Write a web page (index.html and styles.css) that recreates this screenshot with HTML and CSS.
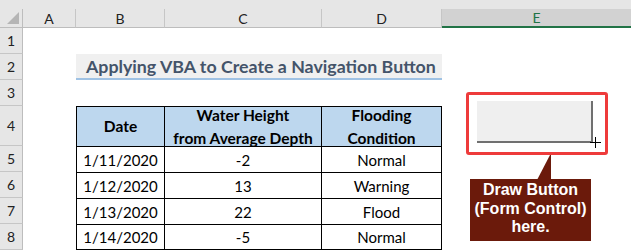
FILE: index.html
```html
<!DOCTYPE html>
<html>
<head>
<meta charset="utf-8">
<link rel="stylesheet" href="styles.css">
</head>
<body>
<div class="app">
  <div class="topstrip"></div>
  <div class="sheet">
    <div class="corner"><span class="tri"></span></div>
    <div class="colhead">A</div>
    <div class="colhead">B</div>
    <div class="colhead">C</div>
    <div class="colhead">D</div>
    <div class="colhead sel">E</div>

    <div class="rowhead">1</div>
    <div class="cell span5"></div>

    <div class="rowhead">2</div>
    <div class="cell"></div>
    <div class="title">Applying VBA to Create a Navigation Button</div>
    <div class="cell"></div>

    <div class="rowhead">3</div>
    <div class="cell span5"></div>

    <div class="rowhead">4</div>
    <div class="cell"></div>
    <div class="th first">Date</div>
    <div class="th">Water Height<br>from Average Depth</div>
    <div class="th last">Flooding<br>Condition</div>
    <div class="cell"></div>

    <div class="rowhead">5</div>
    <div class="cell"></div>
    <div class="td first">1/11/2020</div>
    <div class="td">-2</div>
    <div class="td last">Normal</div>
    <div class="cell"></div>

    <div class="rowhead">6</div>
    <div class="cell"></div>
    <div class="td first">1/12/2020</div>
    <div class="td">13</div>
    <div class="td last">Warning</div>
    <div class="cell"></div>

    <div class="rowhead">7</div>
    <div class="cell"></div>
    <div class="td first">1/13/2020</div>
    <div class="td">22</div>
    <div class="td last">Flood</div>
    <div class="cell"></div>

    <div class="rowhead">8</div>
    <div class="cell"></div>
    <div class="td first lastrow">1/14/2020</div>
    <div class="td lastrow">-5</div>
    <div class="td last lastrow">Normal</div>
    <div class="cell"></div>
  </div>

  <div class="redbox">
    <div class="fbutton"></div>
  </div>
  <svg class="cursor" width="11" height="11" viewBox="0 0 11 11"><path d="M5.5 0V11M0 5.5H11" stroke="#000" stroke-width="1"/></svg>
  <svg class="pointer" width="15" height="26" viewBox="0 0 15 26"><polygon points="0,26 13,1 14,1 14,26" fill="#6b1a0b"/></svg>
  <div class="callout">Draw Button<br>(Form Control)<br>here.</div>
</div>
</body>
</html>
```

FILE: styles.css
```css
html, body {
  margin: 0;
  padding: 0;
  background: #fff;
}
.app {
  position: relative;
  width: 631px;
  height: 251px;
  overflow: hidden;
  font-family: Lato, "Open Sans", sans-serif;
}
.topstrip {
  height: 9px;
  background: #e6e6e6;
}
.sheet {
  display: grid;
  grid-template-columns: 23px 53px 89px 157px 120px 189px;
  grid-template-rows: 19px 26px 26px 26px 40px 26px 26px 26px 26px;
}
.corner {
  background: #e6e6e6;
  border-right: 1px solid #bdbdbd;
  border-bottom: 1px solid #bdbdbd;
  position: relative;
}
.tri {
  position: absolute;
  right: 3px;
  bottom: 3px;
  width: 0;
  height: 0;
  border-left: 12px solid transparent;
  border-bottom: 12px solid #b5b5b5;
}
.colhead {
  background: #e6e6e6;
  border-right: 1px solid #c6c6c6;
  border-bottom: 1px solid #bdbdbd;
  display: flex;
  align-items: center;
  justify-content: center;
  font-size: 14px;
  color: #222;
}
.colhead.sel {
  background: #d2d2d2;
  border-right: none;
  border-bottom: 2px solid #217346;
  color: #217346;
}
.rowhead {
  background: #e6e6e6;
  border-right: 1px solid #bdbdbd;
  border-bottom: 1px solid #c6c6c6;
  display: flex;
  align-items: center;
  justify-content: center;
  font-size: 14px;
  color: #222;
}
.cell {
  background: #fff;
}
.span5 {
  grid-column: span 5;
}
.title {
  grid-column: span 3;
  background: #f0f0f0;
  border-bottom: 2px solid #9fc2e4;
  color: #44546a;
  font-weight: bold;
  font-size: 17.8px;
  display: flex;
  align-items: center;
  padding-left: 10px;
}
.th, .td {
  display: flex;
  align-items: center;
  justify-content: center;
  text-align: center;
  border-top: 1px solid #000;
  border-right: 1px solid #000;
  font-size: 15px;
  color: #000;
}
.th {
  background: #bdd7ee;
  font-weight: bold;
  font-size: 15.5px;
  line-height: 23px;
}
.first {
  border-left: 1px solid #000;
}
.lastrow {
  border-bottom: 1px solid #000;
}
.redbox {
  position: absolute;
  left: 466px;
  top: 92px;
  width: 142px;
  height: 63px;
  box-sizing: border-box;
  border: 3px solid #ee3b3b;
  border-radius: 3px;
  background: #fff;
}
.fbutton {
  position: absolute;
  left: 8px;
  top: 6px;
  width: 114px;
  height: 40px;
  background: #efefef;
  border-right: 2px solid #707070;
  border-bottom: 2px solid #707070;
}
.cursor {
  position: absolute;
  left: 590px;
  top: 137px;
}
.pointer {
  position: absolute;
  left: 537px;
  top: 154px;
}
.callout {
  position: absolute;
  left: 470px;
  top: 179px;
  width: 121px;
  height: 62px;
  box-sizing: border-box;
  padding-top: 2px;
  background: #6b1a0b;
  color: #fff;
  font-family: "Liberation Sans", Arial, sans-serif;
  font-weight: bold;
  font-size: 16px;
  line-height: 18.5px;
  text-align: center;
}
```
